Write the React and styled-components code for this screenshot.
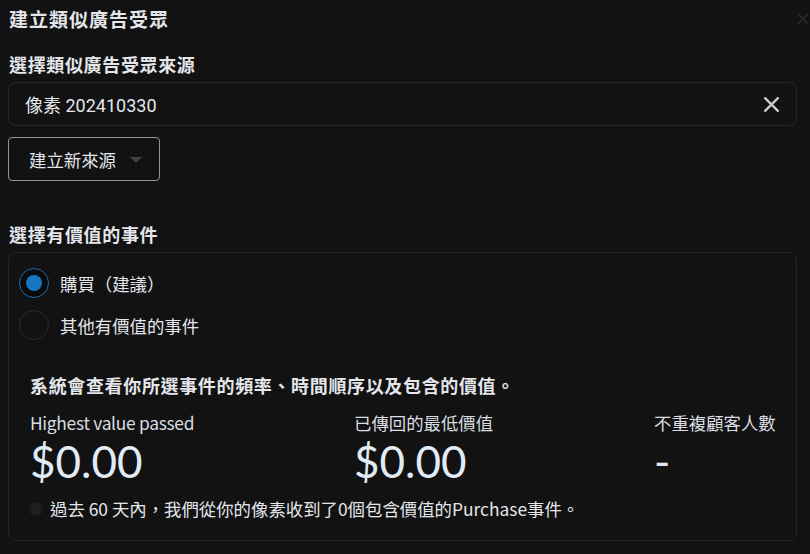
import React from "react";
import styled, { createGlobalStyle } from "styled-components";

const Global = createGlobalStyle`
  html, body { margin: 0; padding: 0; background: #121212; overflow: hidden; }
  body { font-family: "Noto Sans CJK TC", "Noto Sans", sans-serif; color: #e4e6eb; }
  * { box-sizing: border-box; }
`;

const Page = styled.div`
  width: 810px;
  height: 554px;
  padding: 0 13px 0 8px;
  display: flex;
  flex-direction: column;
`;

const Header = styled.div`
  height: 38px;
  display: flex;
  align-items: center;
  justify-content: space-between;
  margin-right: -13px;
`;

const Title = styled.h1`
  margin: 0 0 0 1px;
  font-size: 19px;
  letter-spacing: 1px;
  font-weight: 700;
  line-height: 26px;
  color: #e4e6eb;
`;

const SectionLabel = styled.h2`
  margin: ${(p) => p.$top}px 0 5px 1px;
  font-size: 18px;
  letter-spacing: 0.65px;
  font-weight: 700;
  line-height: 26px;
  color: #e4e6eb;
`;

const InputBox = styled.div`
  height: 44px;
  border: 1px solid #262626;
  border-radius: 8px;
  display: flex;
  align-items: center;
  justify-content: space-between;
  padding: 0 16px 0 16px;
`;

const InputText = styled.span`
  font-family: Roboto, "Noto Sans CJK TC", sans-serif;
  font-size: 18px;
  color: #e4e6eb;
`;

const Button = styled.button`
  margin-top: 11px;
  align-self: flex-start;
  height: 44px;
  width: 152px;
  border: 1px solid #8d949e;
  border-radius: 4px;
  background: transparent;
  color: #e4e6eb;
  font-family: "Noto Sans CJK TC", sans-serif;
  font-size: 17.4px;
  display: flex;
  align-items: center;
  padding: 0 0 0 20px;
  gap: 14px;
`;

const Caret = styled.span`
  width: 0;
  height: 0;
  border-left: 6px solid transparent;
  border-right: 6px solid transparent;
  border-top: 6px solid #3e4146;
  margin-top: 2px;
`;

const Card = styled.div`
  height: 289px;
  border: 1px solid #232323;
  border-radius: 8px;
  padding: 15px 10px 0 10px;
  display: flex;
  flex-direction: column;
`;

const RadioRow = styled.label`
  display: flex;
  align-items: center;
  gap: 11px;
  height: 30px;
  margin-bottom: 12px;
  font-size: 17.4px;
  color: #e4e6eb;
`;

const RadioCircle = styled.span`
  width: 30px;
  height: 30px;
  border-radius: 50%;
  background: ${(p) => (p.$checked ? "#0b0b0b" : "transparent")};
  border: 1px solid ${(p) => (p.$checked ? "#1d6db0" : "#2c2c2c")};
  display: flex;
  align-items: center;
  justify-content: center;
  &::after {
    content: "";
    display: ${(p) => (p.$checked ? "block" : "none")};
    width: 16px;
    height: 16px;
    border-radius: 50%;
    background: #1877c2;
  }
`;

const Info = styled.div`
  padding-left: 11px;
  margin-top: 20px;
  display: flex;
  flex-direction: column;
`;

const Summary = styled.p`
  margin: 0;
  font-size: 18px;
  letter-spacing: 0.65px;
  font-weight: 700;
  line-height: 26px;
  color: #e4e6eb;
`;

const Stats = styled.div`
  margin-top: 12px;
  display: grid;
  grid-template-columns: 324px 300px auto;
`;

const Stat = styled.div`
  display: flex;
  flex-direction: column;
  gap: 1px;
`;

const StatLabel = styled.span`
  font-size: 17.4px;
  line-height: 26px;
  color: #dadde1;
  letter-spacing: ${(p) => (p.$latin ? "-0.3px" : "0")};
`;

const StatValue = styled.span`
  font-family: Lato, "Noto Sans", sans-serif;
  font-size: 44px;
  line-height: 48px;
  color: #e0ebf5;
`;

const Note = styled.div`
  margin-top: 11px;
  display: flex;
  align-items: center;
  gap: 7px;
  font-size: 17.4px;
  line-height: 26px;
  color: #e4e6eb;
`;

const Dot = styled.span`
  width: 14px;
  height: 14px;
  border-radius: 50%;
  background: #1e1e1e;
  margin-left: -1px;
`;

const CloseIcon = ({ size, color, width }) => (
  <svg width={size} height={size} viewBox="0 0 16 16" fill="none">
    <path d="M2 2 L14 14 M14 2 L2 14" stroke={color} strokeWidth={width} strokeLinecap="round" />
  </svg>
);

export default function App() {
  return (
    <>
      <Global />
      <Page>
        <Header>
          <Title>建立類似廣告受眾</Title>
          <CloseIcon size={14} color="#2e2e2e" width={1.5} />
        </Header>
        <SectionLabel $top={13}>選擇類似廣告受眾來源</SectionLabel>
        <InputBox>
          <InputText>像素 202410330</InputText>
          <CloseIcon size={17} color="#c9ccd1" width={2.2} />
        </InputBox>
        <Button>
          建立新來源
          <Caret />
        </Button>
        <SectionLabel $top={40}>選擇有價值的事件</SectionLabel>
        <Card>
          <RadioRow>
            <RadioCircle $checked />
            購買（建議）
          </RadioRow>
          <RadioRow>
            <RadioCircle />
            其他有價值的事件
          </RadioRow>
          <Info>
            <Summary>系統會查看你所選事件的頻率、時間順序以及包含的價值。</Summary>
            <Stats>
              <Stat>
                <StatLabel $latin>Highest value passed</StatLabel>
                <StatValue>$0.00</StatValue>
              </Stat>
              <Stat>
                <StatLabel>已傳回的最低價值</StatLabel>
                <StatValue>$0.00</StatValue>
              </Stat>
              <Stat>
                <StatLabel>不重複顧客人數</StatLabel>
                <StatValue>-</StatValue>
              </Stat>
            </Stats>
            <Note>
              <Dot />
              過去 60 天內，我們從你的像素收到了0個包含價值的Purchase事件。
            </Note>
          </Info>
        </Card>
      </Page>
    </>
  );
}
